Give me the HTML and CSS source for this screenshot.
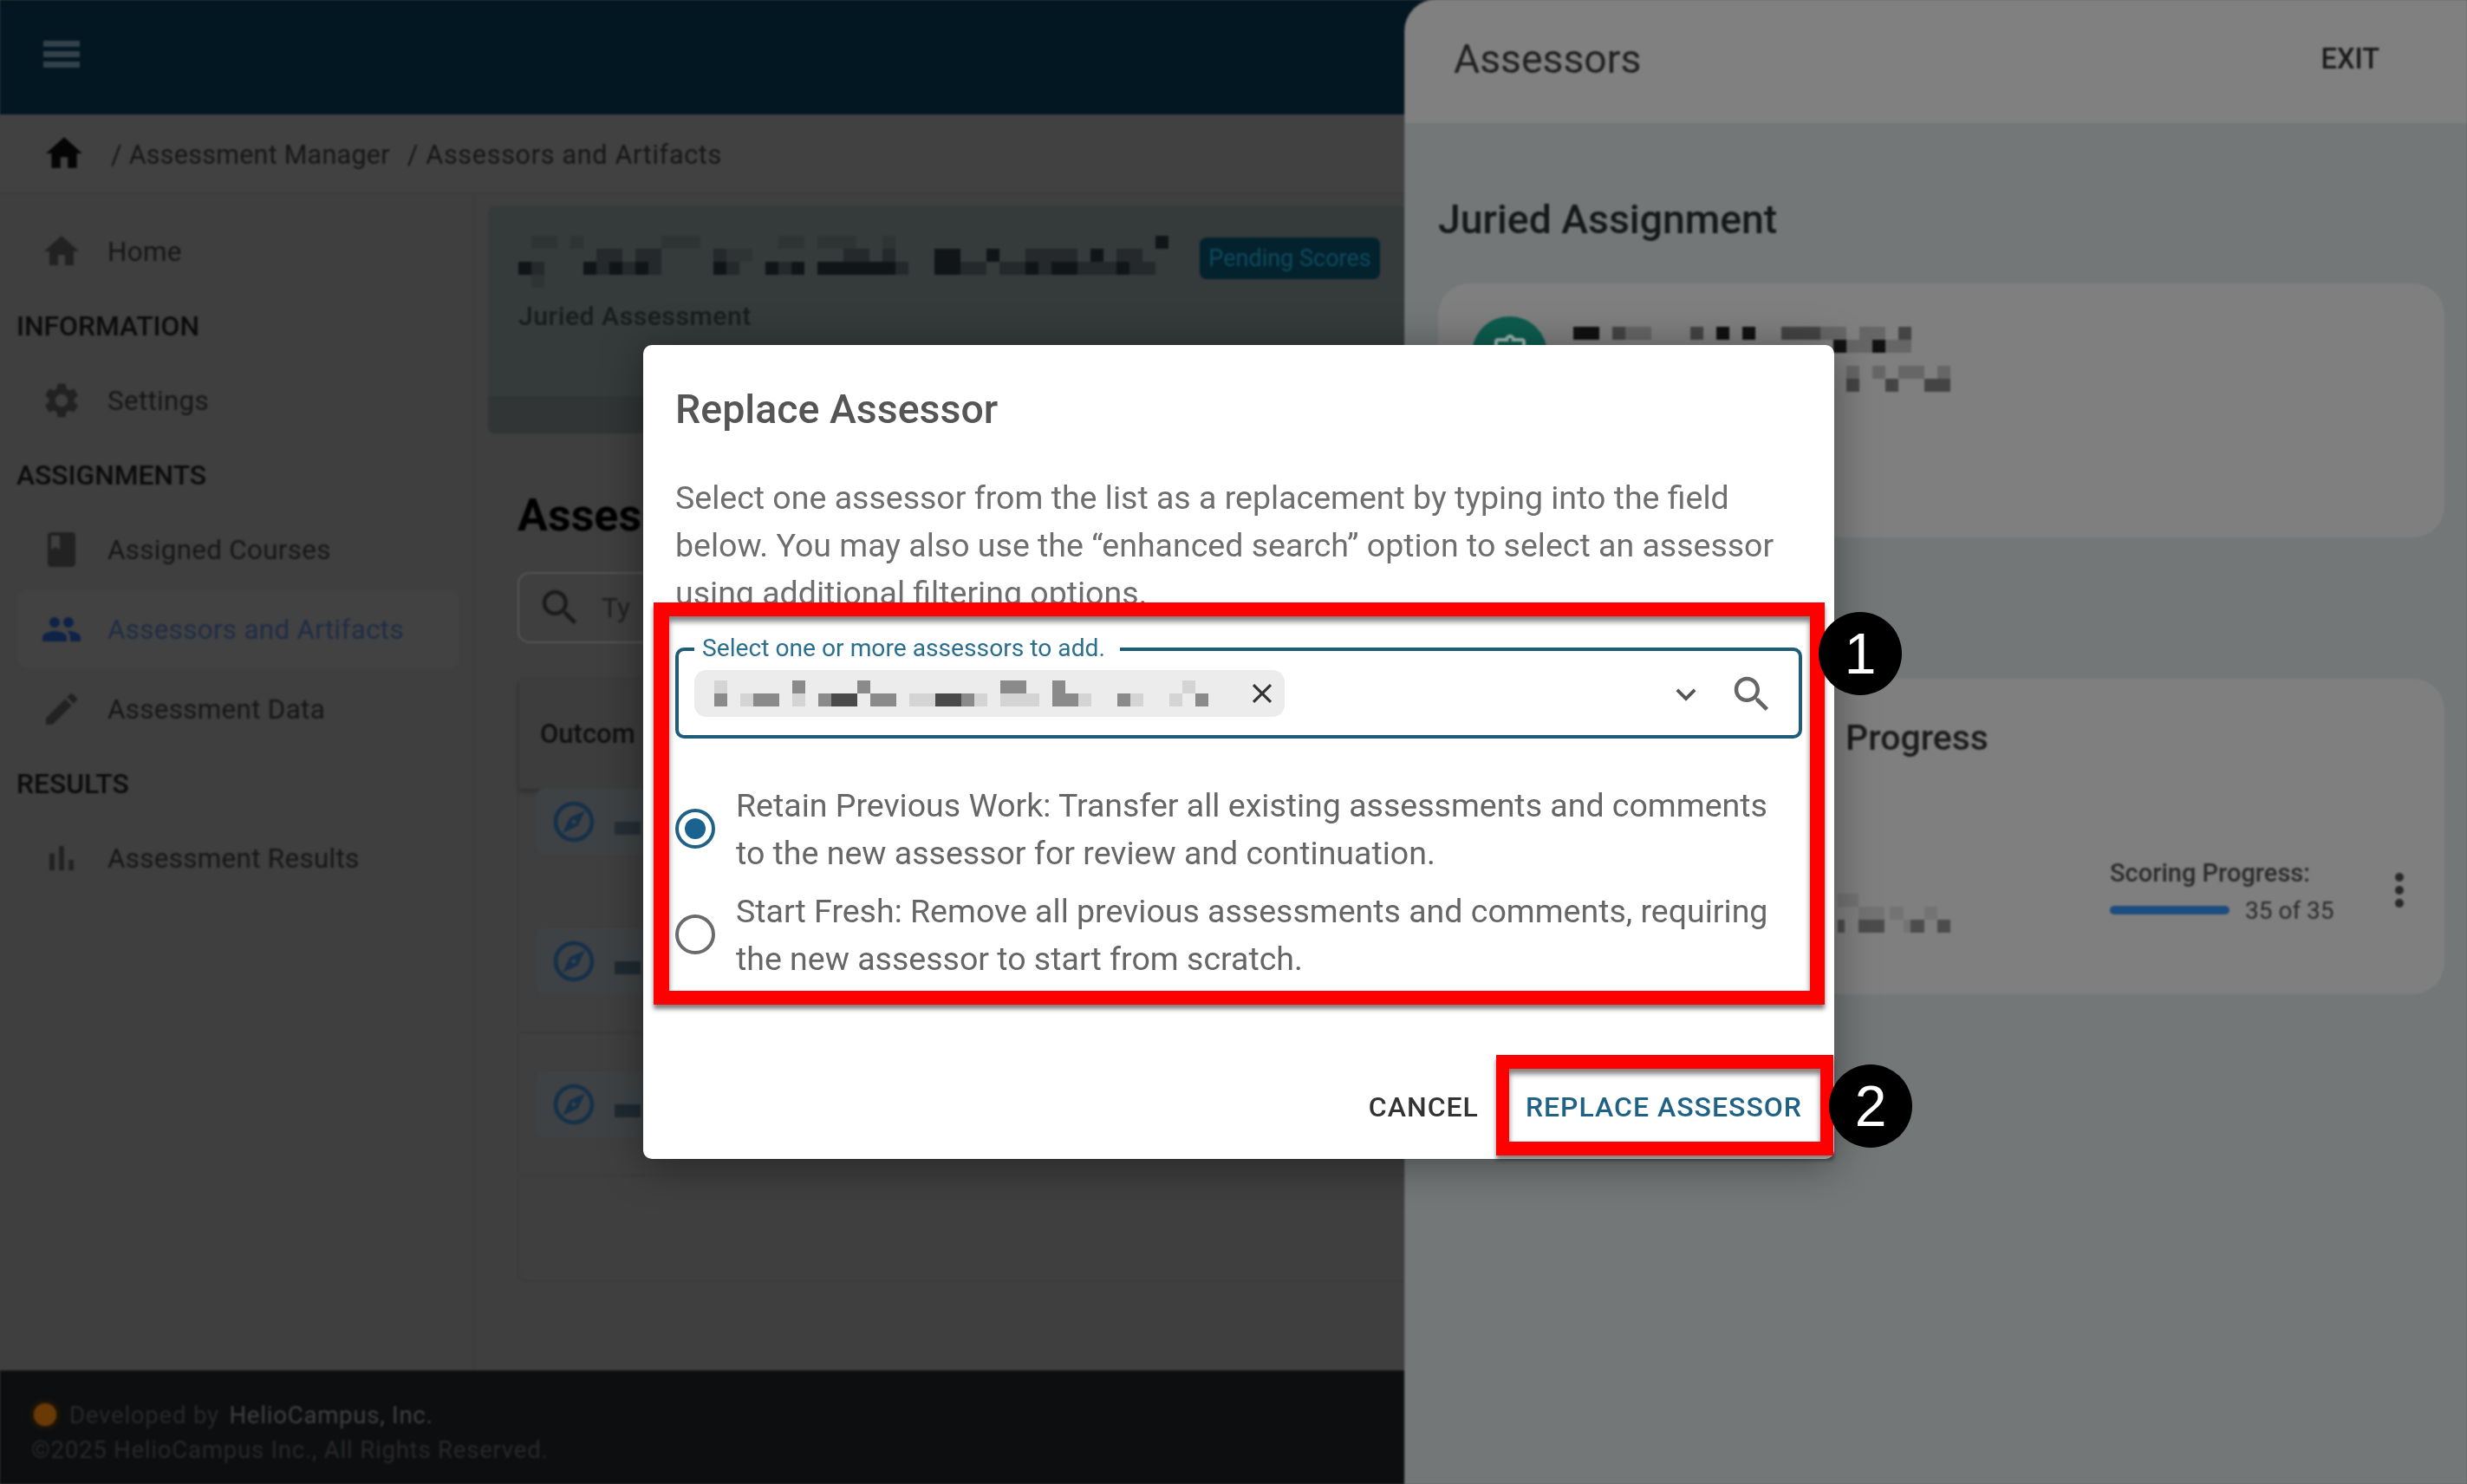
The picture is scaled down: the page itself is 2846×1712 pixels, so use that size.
FILE: index.html
```html
<!DOCTYPE html>
<html lang="en">

<head>
	<meta charset="UTF-8">
	<title>Replace Assessor</title>
	<link rel="stylesheet" href="styles.css">
</head>

<body>
	<svg class="sprite" width="0" height="0">
		<symbol id="i-home" viewBox="0 0 24 24"><path d="M10 20v-6h4v6h5v-8h3L12 3 2 12h3v8z"/></symbol>
		<symbol id="i-gear" viewBox="0 0 24 24"><path d="M19.14 12.94c.04-.3.06-.61.06-.94 0-.32-.02-.64-.07-.94l2.03-1.58c.18-.14.23-.41.12-.61l-1.92-3.32c-.12-.22-.37-.29-.59-.22l-2.39.96c-.5-.38-1.03-.7-1.62-.94l-.36-2.54c-.04-.24-.24-.41-.48-.41h-3.84c-.24 0-.43.17-.47.41l-.36 2.54c-.59.24-1.13.57-1.62.94l-2.39-.96c-.22-.08-.47 0-.59.22L2.74 8.87c-.12.21-.08.47.12.61l2.03 1.58c-.05.3-.09.63-.09.94s.02.64.07.94l-2.03 1.58c-.18.14-.23.41-.12.61l1.92 3.32c.12.22.37.29.59.22l2.39-.96c.5.38 1.03.7 1.62.94l.36 2.54c.05.24.24.41.48.41h3.84c.24 0 .44-.17.47-.41l.36-2.54c.59-.24 1.13-.56 1.62-.94l2.39.96c.22.08.47 0 .59-.22l1.92-3.32c.12-.22.07-.47-.12-.61l-2.01-1.58zM12 15.6c-1.98 0-3.6-1.62-3.6-3.6s1.62-3.6 3.6-3.6 3.6 1.62 3.6 3.6-1.62 3.6-3.6 3.6z"/></symbol>
		<symbol id="i-book" viewBox="0 0 24 24"><path d="M18 2H6c-1.1 0-2 .9-2 2v16c0 1.1.9 2 2 2h12c1.1 0 2-.9 2-2V4c0-1.1-.9-2-2-2zM6 4h5v8l-2.5-1.5L6 12V4z"/></symbol>
		<symbol id="i-people" viewBox="0 0 24 24"><path d="M16 11c1.66 0 2.99-1.34 2.99-3S17.66 5 16 5c-1.66 0-3 1.34-3 3s1.34 3 3 3zm-8 0c1.66 0 2.99-1.34 2.99-3S9.66 5 8 5C6.34 5 5 6.34 5 8s1.34 3 3 3zm0 2c-2.33 0-7 1.17-7 3.5V19h14v-2.5c0-2.33-4.67-3.5-7-3.5zm8 0c-.29 0-.62.02-.97.05 1.16.84 1.97 1.97 1.97 3.45V19h6v-2.5c0-2.33-4.67-3.5-7-3.5z"/></symbol>
		<symbol id="i-edit" viewBox="0 0 24 24"><path d="M3 17.25V21h3.75L17.81 9.94l-3.75-3.75L3 17.25zM20.71 7.04c.39-.39.39-1.02 0-1.41l-2.34-2.34c-.39-.39-1.02-.39-1.41 0l-1.83 1.83 3.75 3.75 1.83-1.83z"/></symbol>
		<symbol id="i-bars" viewBox="0 0 24 24"><path d="M5 9.2h3V19H5zM10.6 5h2.8v14h-2.8zm5.6 8H19v6h-2.8z"/></symbol>
		<symbol id="i-search" viewBox="0 0 24 24"><path d="M15.5 14h-.79l-.28-.27C15.41 12.59 16 11.11 16 9.5 16 5.91 13.09 3 9.5 3S3 5.91 3 9.5 5.91 16 9.5 16c1.61 0 3.09-.59 4.23-1.57l.27.28v.79l5 4.99L20.49 19l-4.99-5zm-6 0C7.01 14 5 11.99 5 9.5S7.01 5 9.5 5 14 7.01 14 9.5 11.99 14 9.5 14z"/></symbol>
		<symbol id="i-close" viewBox="0 0 24 24"><path d="M19 6.41L17.59 5 12 10.59 6.41 5 5 6.41 10.59 12 5 17.59 6.41 19 12 13.41 17.59 19 19 17.59 13.41 12z"/></symbol>
		<symbol id="i-chevron" viewBox="0 0 24 24"><path d="M16.59 8.59L12 13.17 7.41 8.59 6 10l6 6 6-6z"/></symbol>
		<symbol id="i-explore" viewBox="0 0 24 24"><path d="M12 2C6.48 2 2 6.48 2 12s4.48 10 10 10 10-4.48 10-10S17.52 2 12 2zm0 18c-4.41 0-8-3.59-8-8s3.59-8 8-8 8 3.59 8 8-3.59 8-8 8zm-5.5-2.5l7.51-3.49L17.5 6.5 9.99 9.99 6.5 17.5zm5.5-6.6c.61 0 1.1.49 1.1 1.1s-.49 1.1-1.1 1.1-1.1-.49-1.1-1.1.49-1.1 1.1-1.1z"/></symbol>
		<symbol id="i-clipboard" viewBox="0 0 24 24"><path d="M19 3h-4.18C14.4 1.84 13.3 1 12 1s-2.4.84-2.82 2H5c-1.1 0-2 .9-2 2v14c0 1.1.9 2 2 2h14c1.1 0 2-.9 2-2V5c0-1.1-.9-2-2-2zm-7 0c.55 0 1 .45 1 1s-.45 1-1 1-1-.45-1-1 .45-1 1-1zm7 16H5V5h14v14z"/></symbol>
	</svg>

	<div class="app">
		<div class="page">
			<header class="topbar">
				<div class="burger"><span></span><span></span><span></span></div>
			</header>

			<nav class="crumbs">
				<svg class="crumb-home"><use href="#i-home"/></svg>
				<span class="crumb">/ Assessment Manager</span>
				<span class="crumb">/ Assessors and Artifacts</span>
			</nav>

			<div class="content">
				<aside class="sidebar">
					<a class="item"><svg class="ico"><use href="#i-home"/></svg>Home</a>
					<div class="head">INFORMATION</div>
					<a class="item"><svg class="ico"><use href="#i-gear"/></svg>Settings</a>
					<div class="head">ASSIGNMENTS</div>
					<a class="item"><svg class="ico"><use href="#i-book"/></svg>Assigned Courses</a>
					<a class="item active"><svg class="ico"><use href="#i-people"/></svg>Assessors and Artifacts</a>
					<a class="item"><svg class="ico"><use href="#i-edit"/></svg>Assessment Data</a>
					<div class="head">RESULTS</div>
					<a class="item"><svg class="ico"><use href="#i-bars"/></svg>Assessment Results</a>
				</aside>

				<main class="main">
					<section class="hero">
						<div class="hero-top">
							<svg class="mosaic hero-title" viewBox="0 0 765 60" shape-rendering="crispEdges">
								<path fill="#2f3334" d="M15 0h30v15h-30zM60 0h15v15h-15zM165 0h45v15h-45zM225 15h45v15h-45zM300 0h30v15h-30zM345 0h45v15h-45zM420 0h15v15h-15zM15 45h15v15h-15z"/>
								<path fill="#25292b" d="M90 15h30v15h-30zM135 15h30v15h-30zM225 15h15v30h-15zM375 15h30v15h-30zM420 15h15v15h-15zM585 15h60v15h-60zM690 15h30v15h-30zM15 30h15v15h-15zM90 30h15v15h-15zM120 30h15v15h-15zM150 30h15v15h-15zM240 30h15v15h-15zM300 30h15v15h-15zM435 30h15v15h-15zM510 30h30v15h-30zM555 30h30v15h-30zM600 30h15v15h-15zM645 30h45v15h-45zM705 30h30v15h-30z"/>
								<path fill="#111518" d="M0 30h15v15h-15zM75 30h15v15h-15zM105 30h15v15h-15zM135 30h15v15h-15zM225 30h15v15h-15zM285 30h15v15h-15zM315 30h15v15h-15zM345 30h90v15h-90zM480 30h30v15h-30zM585 30h15v15h-15zM615 30h30v15h-30zM690 30h15v15h-15zM480 15h30v15h-30zM540 15h15v15h-15zM660 15h15v15h-15zM735 0h15v15h-15z"/>
							</svg>
							<span class="badge">Pending Scores</span>
						</div>
						<div class="hero-sub">Juried Assessment</div>
					</section>

					<section class="listing">
						<h2 class="listing-title">Asses</h2>
						<div class="filter"><svg class="filter-ico"><use href="#i-search"/></svg><span>Ty</span></div>
						<div class="table">
							<div class="thead">Outcom</div>
							<div class="row row-first"><div class="cell"><svg class="compass"><use href="#i-explore"/></svg><svg class="mosaic row-blur" viewBox="0 0 40 30" shape-rendering="crispEdges"><path fill="#3a444a" d="M15 0h15v15h-15z"/><path fill="#252f36" d="M0 15h30v15h-30z"/></svg></div></div>
							<div class="row"><div class="cell"><svg class="compass"><use href="#i-explore"/></svg><svg class="mosaic row-blur" viewBox="0 0 40 30" shape-rendering="crispEdges"><path fill="#3a444a" d="M15 0h15v15h-15z"/><path fill="#1f2a31" d="M0 15h30v15h-30z"/></svg></div></div>
							<div class="row"><div class="cell"><svg class="compass"><use href="#i-explore"/></svg><svg class="mosaic row-blur" viewBox="0 0 40 30" shape-rendering="crispEdges"><path fill="#3a444a" d="M15 0h15v15h-15z"/><path fill="#1f2a31" d="M0 15h30v15h-30z"/></svg></div></div>
						</div>
					</section>
				</main>
			</div>

			<footer class="footer">
				<div class="foot-line"><span class="orb"></span>Developed by&nbsp;<b>HelioCampus, Inc.</b></div>
				<div class="foot-copy">©2025 HelioCampus Inc., All Rights Reserved.</div>
			</footer>
		</div>

		<aside class="drawer">
			<div class="drawer-head">
				<span class="drawer-title">Assessors</span>
				<span class="exit">EXIT</span>
			</div>
			<div class="drawer-body">
				<h3 class="drawer-h">Juried Assignment</h3>
				<div class="card card-one">
					<div class="avatar"><svg class="avatar-ico"><use href="#i-clipboard"/></svg></div>
					<svg class="mosaic card-blur" viewBox="0 0 435 75" shape-rendering="crispEdges">
						<path fill="#111" d="M0 0h30v15h-30zM165 0h15v15h-15zM195 0h15v15h-15zM300 15h15v15h-15zM345 15h15v15h-15z"/>
						<path fill="#444" d="M45 0h15v15h-15zM135 0h15v15h-15zM240 0h45v15h-45zM375 0h15v15h-15zM315 60h15v15h-15zM360 60h15v15h-15zM405 60h30v15h-30z"/>
						<path fill="#666" d="M60 0h30v15h-30zM285 0h30v15h-30zM330 0h30v15h-30zM315 15h30v15h-30zM360 15h30v15h-30zM315 45h15v15h-15zM345 45h15v15h-15zM375 45h30v15h-30zM420 45h15v15h-15z"/>
					</svg>
				</div>
				<div class="card card-two">
					<div class="card-head">Progress</div>
					<div class="card-row">
						<svg class="mosaic prog-blur" viewBox="0 0 130 52" shape-rendering="crispEdges">
							<path fill="#737373" d="M0 0h24v15h-24zM24 15h30v15h-30zM60 15h16v15h-16zM100 15h15v15h-15zM76 30h16v15h-16z"/>
							<path fill="#4c4c4c" d="M0 30h8v15h-8zM24 30h30v15h-30zM84 30h16v15h-16zM115 30h15v15h-15z"/>
						</svg>
						<div class="score">
							<div class="score-label">Scoring Progress:</div>
							<div class="score-line"><span class="score-bar"></span><span class="score-num">35 of 35</span></div>
						</div>
						<div class="dots"><span></span><span></span><span></span></div>
					</div>
				</div>
			</div>
		</aside>
	</div>

	<div class="dialog">
		<h2 class="dialog-title">Replace Assessor</h2>
		<p class="dialog-text">Select one assessor from the list as a replacement by typing into the field below. You may also use the “enhanced search” option to select an assessor using additional filtering options.</p>
		<div class="field">
			<label class="field-label">Select one or more assessors to add.</label>
			<div class="chip">
				<svg class="mosaic chip-blur" viewBox="0 0 600 30" shape-rendering="crispEdges">
					<path fill="#d4d4d4" d="M0 0h15v15h-15zM30 15h15v15h-15zM90 15h15v15h-15zM225 15h15v15h-15zM240 15h30v15h-30zM300 15h15v15h-15zM330 15h30v15h-30zM360 15h15v15h-15zM420 15h15v15h-15zM480 15h15v15h-15zM525 15h15v15h-15zM540 0h15v15h-15z"/>
					<path fill="#8a8a8a" d="M0 15h15v15h-15zM45 15h30v15h-30zM90 0h15v15h-15zM120 15h15v15h-15zM165 0h15v15h-15zM180 15h30v15h-30zM285 15h15v15h-15zM330 0h30v15h-30zM390 0h15v15h-15zM390 15h30v15h-30zM465 15h15v15h-15zM555 15h15v15h-15z"/>
					<path fill="#4a4a4a" d="M135 15h30v15h-30zM255 15h30v15h-30z"/>
				</svg>
				<svg class="chip-x"><use href="#i-close"/></svg>
			</div>
			<svg class="field-chev"><use href="#i-chevron"/></svg>
			<svg class="field-search"><use href="#i-search"/></svg>
		</div>
		<div class="options">
			<div class="option">
				<span class="radio checked"></span>
				<span class="option-text">Retain Previous Work: Transfer all existing assessments and comments to the new assessor for review and continuation.</span>
			</div>
			<div class="option">
				<span class="radio"></span>
				<span class="option-text">Start Fresh: Remove all previous assessments and comments, requiring the new assessor to start from scratch.</span>
			</div>
		</div>
		<div class="actions">
			<button class="btn">CANCEL</button>
			<button class="btn btn-main">REPLACE ASSESSOR</button>
		</div>
	</div>

	<div class="mark mark-one"></div>
	<div class="mark mark-two"></div>
	<div class="num num-one">1</div>
	<div class="num num-two">2</div>
</body>

</html>
```

FILE: styles.css
```css
* {
	box-sizing: border-box;
}

html,
body {
	margin: 0;
	height: 1712px;
	overflow: hidden;
}

body {
	position: relative;
	font-family: Roboto, 'Liberation Sans', sans-serif;
	color: #1c1c1c;
	background: #3f3f3f;
}

.sprite {
	position: absolute;
}

svg {
	display: block;
	fill: currentColor;
}

.app {
	display: flex;
	height: 1712px;
	filter: blur(.8px);
}

.page {
	flex: 0 0 1657px;
	display: flex;
	flex-direction: column;
}

/* top bar + crumbs */
.topbar {
	height: 132px;
	background: #021722;
	display: flex;
	align-items: center;
	padding-left: 50px;
	flex: none;
}

.burger {
	width: 42px;
	display: flex;
	flex-direction: column;
	gap: 5px;
	margin-top: -7px;
}

.burger span {
	height: 7px;
	background: #33424a;
}

.crumbs {
	height: 92px;
	flex: none;
	background: #414141;
	border-bottom: 2px solid #3c3c3c;
	display: flex;
	align-items: center;
	padding: 3px 0 0 49px;
	font-size: 30.5px;
	letter-spacing: .25px;
	color: #161616;
}

.crumb-home {
	width: 50px;
	height: 50px;
	margin-top: -3px;
	color: #050505;
	margin-right: 29px;
}

.crumb {
	margin-right: 20px;
}

.crumb + .crumb {
	letter-spacing: .7px;
}

/* sidebar */
.content {
	flex: 1;
	display: flex;
	min-height: 0;
}

.sidebar {
	width: 548px;
	flex: none;
	padding: 20px 16px 0 20px;
	border-right: 2px solid #3c3c3c;
}

.item {
	height: 92px;
	display: flex;
	align-items: center;
	gap: 29px;
	padding-left: 27px;
	font-size: 31.4px;
	letter-spacing: .3px;
	color: #161616;
	border-radius: 12px;
}

.ico {
	width: 48px;
	height: 48px;
	color: #222;
}

.item.active {
	background: #424242;
	color: #1f2c45;
}

.item.active .ico {
	color: #0f2347;
}

.head {
	height: 80px;
	margin-left: -1px;
	line-height: 80px;
	font-size: 31.8px;
	font-weight: 500;
	color: #0b0b0b;
}

/* main column */
.main {
	flex: 1;
	padding: 14px 0 0 15px;
	min-width: 0;
}

.hero {
	height: 262px;
	padding: 34px 0 0 35px;
	background: linear-gradient(#353a3a 0, #353a3a 219px, #323535 219px);
	border-radius: 8px 0 0 8px;
}

.hero-top {
	display: flex;
	align-items: flex-start;
	gap: 21px;
}

.mosaic {
	flex: none;
}

.hero-title {
	width: 765px;
	height: 60px;
}

.badge {
	width: 208px;
	height: 48px;
	margin-top: 2px;
	line-height: 48px;
	text-align: center;
	background: #03222e;
	border-radius: 8px;
	color: #0f4a5c;
	font-size: 27px;
}

.hero-sub {
	margin-top: 15px;
	font-size: 30.2px;
	font-weight: 500;
	letter-spacing: .5px;
	color: #191c1c;
}

.listing {
	padding-left: 34px;
}

.listing-title {
	margin: 65px 0 0;
	height: 60px;
	line-height: 60px;
	font-size: 52px;
	font-weight: 700;
	color: #000;
}

.filter {
	margin-top: 35px;
	width: 900px;
	height: 82px;
	border: 2px solid #555;
	border-radius: 14px;
	display: flex;
	align-items: center;
	gap: 21px;
	padding-left: 20px;
	font-size: 32px;
	color: #1f1f1f;
}

.filter-ico {
	width: 54px;
	height: 54px;
	color: #1b1b1b;
}

.table {
	margin-top: 40px;
	height: 697px;
	border: 2px solid #3b3b3b;
	border-radius: 10px 0 0 10px;
}

.thead {
	height: 126px;
	padding-left: 24px;
	line-height: 126px;
	font-size: 31px;
	font-weight: 500;
	color: #101010;
	background: #3d3d3d;
	box-shadow: 0 4px 6px rgba(0, 0, 0, .25);
}

.row {
	height: 165px;
	padding-left: 20px;
	display: flex;
	align-items: center;
	border-bottom: 2px solid #3a3a3a;
}

.row-first {
	height: 117px;
	align-items: flex-start;
	border-bottom: 0;
}

.cell {
	height: 76px;
	width: 300px;
	padding-left: 15px;
	display: flex;
	align-items: center;
	gap: 19px;
	background: #3f4244;
	border-radius: 8px;
}

.compass {
	width: 56px;
	height: 56px;
	color: #14304a;
}

.row-blur {
	width: 40px;
	height: 30px;
}

/* footer */
.footer {
	height: 131px;
	flex: none;
	padding: 33px 0 0 36px;
	background: #0d0e0f;
	font-size: 27.5px;
	letter-spacing: .8px;
	color: #282828;
}

.foot-line {
	display: flex;
	align-items: center;
	height: 36px;
}

.foot-line b {
	margin-left: 4px;
	font-weight: 400;
	color: #3f3f3f;
}

.orb {
	width: 26px;
	height: 26px;
	margin: 0 15px 0 3px;
	border-radius: 50%;
	background: #6a3a06;
	box-shadow: 0 0 8px #4a2904;
}

.foot-copy {
	margin-top: 6px;
}

/* drawer on the right */
.drawer {
	flex: 0 0 1225px;
	margin-left: -36px;
	position: relative;
	background: #737777;
	border-radius: 36px 0 0 0;
	overflow: hidden;
	box-shadow: 0 0 0 1px #6a6e6e;
}

.drawer-head {
	height: 142px;
	padding: 0 101px 6px 56px;
	display: flex;
	align-items: center;
	justify-content: space-between;
	background: #808080;
}

.drawer-title {
	font-size: 46.3px;
	color: #202020;
}

.exit {
	font-size: 32.5px;
	font-weight: 500;
	color: #1a1a1a;
}

.drawer-body {
	padding: 81px 26px 0 38px;
}

.drawer-h {
	margin: 0;
	height: 60px;
	line-height: 60px;
	font-size: 46.4px;
	font-weight: 500;
	color: #151818;
}

.card {
	background: #7f7f7f;
	border-radius: 36px;
}

.card-one {
	height: 293px;
	margin-top: 44px;
	padding: 38px 0 0 39px;
	display: flex;
	gap: 30px;
}

.avatar {
	width: 87px;
	height: 87px;
	padding-top: 19px;
	border-radius: 50%;
	background: #0d5c4f;
	color: #9fb9b3;
}

.avatar-ico {
	width: 48px;
	height: 48px;
	margin: 0 auto;
}

.card-blur {
	width: 435px;
	height: 75px;
	margin-top: 12px;
}

.card-two {
	height: 364px;
	margin-top: 163px;
	padding-top: 38px;
}

.card-head {
	padding-left: 470px;
	height: 60px;
	line-height: 60px;
	font-size: 41px;
	font-weight: 500;
	color: #1b1b1b;
}

.card-row {
	margin-top: 100px;
	padding: 0 47px 0 461px;
	display: flex;
	align-items: center;
}

.prog-blur {
	width: 130px;
	height: 52px;
	margin-top: 50px;
}

.score {
	margin-left: 184px;
}

.score-label {
	height: 36px;
	line-height: 36px;
	font-size: 29px;
	font-weight: 500;
	color: #2a2a2a;
}

.score-line {
	height: 50px;
	display: flex;
	align-items: center;
	gap: 18px;
	font-size: 28px;
	color: #2a2a2a;
}

.score-bar {
	width: 138px;
	height: 10px;
	border-radius: 5px;
	background: #1c4d7e;
}

.dots {
	margin-left: auto;
	margin-bottom: 10px;
	display: flex;
	flex-direction: column;
	gap: 5px;
}

.dots span {
	width: 10px;
	height: 10px;
	border-radius: 50%;
	background: #2a2a2a;
}

/* dialog */
.dialog {
	position: absolute;
	left: 742px;
	top: 398px;
	width: 1374px;
	height: 939px;
	padding: 44px 37px 0 37px;
	background: #fff;
	border-radius: 10px;
	box-shadow: 0 6px 50px rgba(0, 0, 0, .4);
	display: flex;
	flex-direction: column;
	filter: blur(.6px);
}

.dialog-title {
	margin: 0;
	height: 60px;
	line-height: 60px;
	font-size: 46.5px;
	font-weight: 500;
	color: #555;
}

.dialog-text {
	margin: 45px 0 0;
	font-size: 37.5px;
	line-height: 55px;
	color: #6e6e6e;
}

.field {
	position: relative;
	margin-top: 35px;
	height: 105px;
	flex: none;
	padding: 22px 0 0 18px;
	border: 4px solid #1f5c7a;
	border-radius: 10px;
}

.field-label {
	position: absolute;
	left: 18px;
	top: -17px;
	padding: 0 17px 0 9px;
	background: #fff;
	font-size: 28.2px;
	line-height: 28px;
	color: #2a6f8f;
}

.chip {
	width: 681px;
	height: 54px;
	display: flex;
	align-items: center;
	padding-left: 23px;
	background: #ececec;
	border-radius: 14px;
}

.chip-blur {
	width: 600px;
	height: 30px;
}

.chip-x {
	width: 38px;
	height: 38px;
	margin-left: 13px;
	color: #333;
}

.field-chev {
	position: absolute;
	right: 107px;
	top: 27px;
	width: 46px;
	height: 46px;
	color: #555;
}

.field-search {
	position: absolute;
	right: 27px;
	top: 23px;
	width: 54px;
	height: 54px;
	color: #666;
}

.options {
	margin-top: 50px;
	display: flex;
	flex-direction: column;
	gap: 12px;
}

.option {
	display: flex;
	align-items: center;
	gap: 24px;
}

.radio {
	flex: none;
	margin-top: -2px;
	width: 46px;
	height: 46px;
	border: 4px solid #6b6b6b;
	border-radius: 50%;
	display: flex;
	align-items: center;
	justify-content: center;
}

.radio.checked {
	border-color: #1f6285;
}

.radio.checked::after {
	content: '';
	width: 24px;
	height: 24px;
	border-radius: 50%;
	background: #1a6390;
}

.option-text {
	font-size: 37.5px;
	line-height: 55px;
	color: #666;
}

.actions {
	margin-top: auto;
	height: 120px;
	flex: none;
	display: flex;
	justify-content: flex-end;
	align-items: center;
	gap: 54px;
}

.btn {
	padding: 0;
	border: 0;
	background: none;
	font-family: inherit;
	font-size: 32px;
	font-weight: 500;
	letter-spacing: 1px;
	line-height: 40px;
	color: #333;
}

.btn-main {
	color: #1f6285;
}

/* annotations */
.mark {
	position: absolute;
	border-style: solid;
	border-color: #fe0000;
	box-shadow: 0 5px 5px rgba(0, 0, 0, .5), inset 0 6px 6px rgba(0, 0, 0, .5);
}

.mark-one {
	left: 754px;
	top: 695px;
	width: 1351px;
	height: 464px;
	border-width: 16px 17px 16px 18px;
}

.mark-two {
	left: 1726px;
	top: 1217px;
	width: 389px;
	height: 116px;
	border-width: 16px 15px;
}

.num {
	position: absolute;
	width: 96px;
	height: 96px;
	border-radius: 50%;
	background: #000;
	color: #fff;
	font-family: 'Liberation Sans', Arial, sans-serif;
	font-size: 66px;
	line-height: 96px;
	text-align: center;
}

.num-one {
	left: 2098px;
	top: 706px;
}

.num-two {
	left: 2110px;
	top: 1228px;
}
```
